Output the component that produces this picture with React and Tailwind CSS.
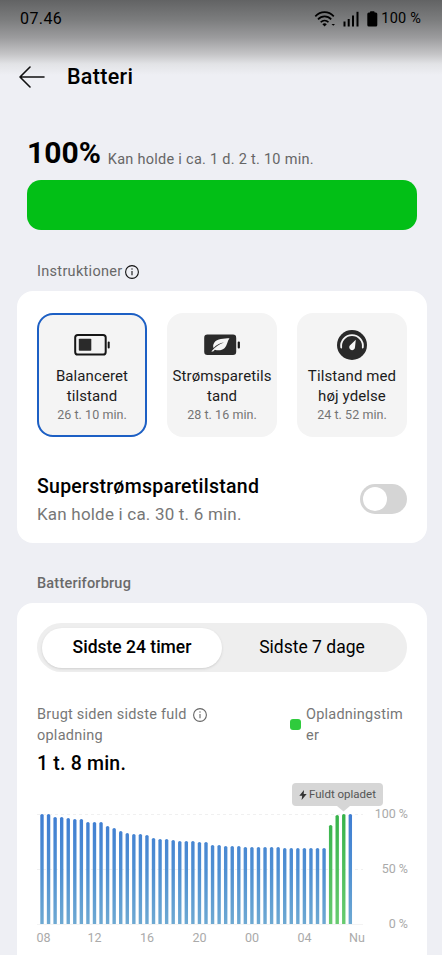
import React from 'react';

const levels = [
  110, 110, 107, 107, 106, 105, 105, 102, 102, 102, 98, 96, 93, 91, 90, 90,
  89, 86, 85, 85, 84, 83, 83, 83, 82, 82, 79, 79, 78, 78, 78, 77,
  77, 77, 77, 77, 77, 76, 76, 76, 76, 76, 76, 76, 99, 109, 110, 110
];

const hours = [
  { label: '08', x: 36.5 },
  { label: '12', x: 87.5 },
  { label: '16', x: 140 },
  { label: '20', x: 192.5 },
  { label: '00', x: 245 },
  { label: '04', x: 297.5 },
  { label: 'Nu', x: 349 }
];

const InfoIcon = ({ className }) => (
  <svg viewBox="0 0 14 14" className={className} fill="none" stroke="currentColor">
    <circle cx="7" cy="7" r="6.4" strokeWidth="1.1" />
    <path d="M7 6v4.2" strokeWidth="1.1" />
    <circle cx="7" cy="4" r="0.7" fill="currentColor" stroke="none" />
  </svg>
);

const BatteryIcon = () => (
  <svg width="36" height="22" viewBox="0 0 36 22" fill="none">
    <rect x="1.2" y="1" width="30.5" height="19.5" rx="2.6" stroke="#161616" strokeWidth="2" />
    <rect x="4.8" y="4.8" width="12.5" height="12" rx="0.8" fill="#2a2a2a" />
    <rect x="33.7" y="7.5" width="2" height="7" rx="1" fill="#161616" />
  </svg>
);

const LeafIcon = () => (
  <svg width="36" height="22" viewBox="0 0 36 22" fill="none">
    <rect x="0.2" y="0.5" width="32" height="20.5" rx="3.2" fill="#2a2a2a" />
    <rect x="33.7" y="7.5" width="2.2" height="7" rx="1" fill="#161616" />
    <path d="M25.500 4.200c-5.500.3-12.500.2-15.300 4.500-1.500 2.300-1.200 4.200-.6 5.400 3-3.600 6.400-5.100 10.400-5.600-4.300 1.300-8.800 4.200-12.700 8.900l1.800.2 1.800-1.900c3.200 1.300 7.400.7 9.800-1.800 2.500-2.500 2.600-6.900 4.800-9.700z" fill="#f5f5f5" />
  </svg>
);

const GaugeIcon = () => (
  <svg width="30" height="30" viewBox="0 0 30 30" fill="none">
    <circle cx="15" cy="15" r="15" fill="#2a2a2a" />
    <path d="M4.200 17.500A10.900 10.900 0 1 1 25.800 17.500" stroke="#f5f5f5" strokeWidth="1.800" strokeLinecap="round" />
    <path d="M18.800 9.800 18 17.200a2.900 2.900 0 1 1-5.200-1.700z" fill="#f5f5f5" />
  </svg>
);

const modes = [
  { lines: ['Balanceret', 'tilstand'], time: '26 t. 10 min.', icon: <BatteryIcon />, active: true },
  { lines: ['Strømsparetils', 'tand'], time: '28 t. 16 min.', icon: <LeafIcon /> },
  { lines: ['Tilstand med', 'høj ydelse'], time: '24 t. 52 min.', icon: <GaugeIcon /> }
];

const StatusBar = () => (
  <div className="flex h-[38px] items-center justify-between pl-5 pr-[21px] text-black">
    <span className="text-[16px] tracking-[0.4px]">07.46</span>
    <div className="flex items-center">
      <svg width="22" height="16" viewBox="0 0 22 16" fill="none" stroke="#000" strokeWidth="1.700">
        <path d="M1.300 5.300c5.300-5.500 13.200-5.500 18.500 0" />
        <path d="M4 8.400c3.700-4 9.500-4 13.200 0" />
        <path d="M6.700 11.300c2.200-2.400 5.600-2.400 7.800 0" />
        <path d="M8.400 13.200c1.300-1.200 3.100-1.200 4.400 0l-2.200 2.300z" fill="#000" stroke="none" />
        <path d="M17.500 12.900H21l-1.700 1.900z" fill="#000" stroke="none" />
      </svg>
      <svg className="ml-[7px]" width="17" height="16" viewBox="0 0 17 16" fill="#000">
        <rect x="0.500" y="10.500" width="2" height="5" />
        <rect x="4.700" y="8" width="2" height="7.500" />
        <rect x="9" y="4.500" width="2" height="11" />
        <rect x="13.500" y="0.800" width="2" height="14.700" />
      </svg>
      <svg className="ml-[7px]" width="11" height="16" viewBox="0 0 11 16" fill="#000">
        <rect x="0.300" y="1.500" width="10" height="14" rx="1.500" />
        <rect x="3" y="0.200" width="4.600" height="3" rx="0.800" />
      </svg>
      <span className="ml-[3px] text-[14.500px] tracking-[0.2px]">100 %</span>
    </div>
  </div>
);

const ModeCard = ({ mode }) => (
  <div
    className={
      mode.active
        ? 'flex h-[124px] w-[110px] flex-col items-center rounded-[16px] bg-[#f4f4f4] ring-2 ring-inset ring-[#1c5fc4]'
        : 'flex h-[124px] w-[110px] flex-col items-center rounded-[16px] bg-[#f4f4f4]'
    }
  >
    <div className="mt-4 flex h-8 items-center justify-center">{mode.icon}</div>
    <div className="mt-[5px] text-center text-[15px] leading-[20px] tracking-[0.1px] text-[#1c1c1c]">
      {mode.lines.map((line) => (
        <div key={line} className="whitespace-nowrap">{line}</div>
      ))}
    </div>
    <div className="mt-px text-[12.500px] leading-4 tracking-[0.050px] text-[#747474]">{mode.time}</div>
  </div>
);

const UsageChart = () => (
  <div className="relative mt-[37px] h-[140px]">
    <svg className="block" width="369" height="112" viewBox="37 813 369 112">
      <defs>
        <linearGradient id="usage" gradientUnits="userSpaceOnUse" x1="0" y1="814" x2="0" y2="924">
          <stop offset="0" stopColor="#3f7dd2" />
          <stop offset="0.500" stopColor="#4f8fd2" />
          <stop offset="1" stopColor="#6ea9d2" />
        </linearGradient>
        <linearGradient id="charge" gradientUnits="userSpaceOnUse" x1="0" y1="814" x2="0" y2="924">
          <stop offset="0" stopColor="#36b34a" />
          <stop offset="1" stopColor="#68cb70" />
        </linearGradient>
      </defs>
      <path d="M37 814.500h326M37 869.500h326" stroke="#f0f0f0" strokeDasharray="3 3" />
      <path d="M37 924.500h326" stroke="#f3f3f3" />
      {levels.map((level, i) => {
        const x = 40.3 + i * 6.56;
        const top = 924 - level;
        return (
          <path
            key={i}
            d={`M${x} 924V${top + 1.5}q0-1.500 1.700-1.500t1.700 1.500V924z`}
            fill={i > 43 && i < 47 ? 'url(#charge)' : 'url(#usage)'}
          />
        );
      })}
    </svg>

    {/* Tooltip over the charged bars */}
    <div className="absolute left-[255px] top-[-30px] flex h-[23px] w-[91px] items-center justify-center rounded-[4px] bg-[#d6d6d6] text-[#555]">
      <svg className="mr-[2px]" width="8" height="10" viewBox="0 0 8 10" fill="#333">
        <path d="M5 0 .3 5.700h2.900L2.600 10 7.700 4H4.700z" />
      </svg>
      <span className="whitespace-nowrap text-[11.500px]">Fuldt opladet</span>
      <svg className="absolute left-[45px] top-[22.500px]" width="13" height="6" viewBox="0 0 13 6" fill="#d6d6d6">
        <path d="M0 0h13L6.500 5.500z" />
      </svg>
    </div>

    <div className="absolute right-[-1px] top-[-6px] flex h-[124px] flex-col justify-between text-right text-[12.500px] leading-[14px] text-[#aaa]">
      <span>100 %</span>
      <span>50 %</span>
      <span>0 %</span>
    </div>
    {hours.map((hour) => (
      <span
        key={hour.label}
        className="absolute top-[117px] text-[12.500px] leading-4 text-[#aaa]"
        style={{ left: hour.x - 37 }}
      >
        {hour.label}
      </span>
    ))}
  </div>
);

const App = () => {
  return (
    <div className="h-[955px] w-[442px] overflow-hidden bg-[#eeeff4] bg-[linear-gradient(to_bottom,#626364_0px,#7c7d7e_20px,#9c9c9e_38px,#c4c4c6_54px,#e2e3e6_64px,#eeeff4_75px)] font-['Roboto',sans-serif] text-black">
      <StatusBar />

      <header className="flex h-[78px] items-center pl-[19px]">
        <svg width="26" height="22" viewBox="0 0 26 22" fill="none" stroke="#111" strokeWidth="1.600" strokeLinecap="round" strokeLinejoin="round">
          <path d="M25 11H1M11 1 1 11l10 10" />
        </svg>
        <h1 className="ml-[22px] text-[21.500px] font-medium tracking-[0.3px]">Batteri</h1>
      </header>

      <section className="px-[27px]">
        <div className="flex h-[64px] items-end pb-[9px]">
          <span className="text-[30px] font-bold leading-9">100%</span>
          <span className="ml-[7px] pb-px text-[14.500px] leading-5 tracking-[0.270px] text-[#666]">Kan holde i ca. 1 d. 2 t. 10 min.</span>
        </div>
        <div className="h-[50px] w-[390px] rounded-[14px] bg-[#02bf16]"></div>
      </section>

      <div className="mt-[31px] flex h-[21px] items-center pl-[37px] text-[14.500px] text-[#686868]">
        <span className="tracking-[0.300px]">Instruktioner</span>
        <InfoIcon className="ml-[3px] size-[14px] text-[#111]" />
      </div>

      <section className="mx-[17px] mt-[9px] h-[252px] w-[410px] rounded-[16px] bg-white px-5 pt-[22px]">
        <div className="flex justify-between">
          {modes.map((mode) => (
            <ModeCard key={mode.time} mode={mode} />
          ))}
        </div>
        <div className="mt-[36px] flex items-center justify-between">
          <div>
            <div className="text-[19.500px] font-medium leading-7 tracking-[0.250px]">Superstrømsparetilstand</div>
            <div className="text-[17px] leading-[27px] tracking-[0.2px] text-[#777]">Kan holde i ca. 30 t. 6 min.</div>
          </div>
          <div className="mb-[3px] flex h-[30px] w-[47px] items-center rounded-full bg-[#d5d5d5] px-[3px]">
            <div className="size-[24px] rounded-full bg-white"></div>
          </div>
        </div>
      </section>

      <div className="mt-[30px] flex h-[21px] items-center pl-[37px] text-[14.500px] font-medium tracking-[0.2px] text-[#6a6a6a]">Batteriforbrug</div>

      <section className="mx-[17px] mt-[9px] h-[360px] w-[410px] rounded-t-[16px] bg-white px-5 pt-5">
        <div className="flex h-[49px] items-center rounded-full bg-[#eee] px-[5px]">
          <div className="flex h-[40px] w-[180px] items-center justify-center rounded-full bg-white text-[17.500px] font-medium shadow-sm">Sidste 24 timer</div>
          <div className="flex h-[40px] w-[180px] items-center justify-center text-[17.500px]">Sidste 7 dage</div>
        </div>

        <div className="mt-[33px] flex justify-between text-[14.500px] leading-[20.500px] tracking-[0.230px] text-[#777]">
          <div>
            <div className="flex items-center">
              Brugt siden sidste fuld
              <InfoIcon className="ml-1.5 size-[14px] text-[#666]" />
            </div>
            <div>opladning</div>
          </div>
          <div className="flex w-[117px] items-center">
            <span className="mb-[3px] mr-[5px] size-[11px] shrink-0 rounded-[3px] bg-[#2fcb3d]"></span>
            <div>
              <div>Opladningstim</div>
              <div>er</div>
            </div>
          </div>
        </div>
        <div className="mt-[6px] text-[19.500px] font-medium leading-6 tracking-[0.2px]">1 t. 8 min.</div>
        <UsageChart />
      </section>
    </div>
  );
};

export default App;
